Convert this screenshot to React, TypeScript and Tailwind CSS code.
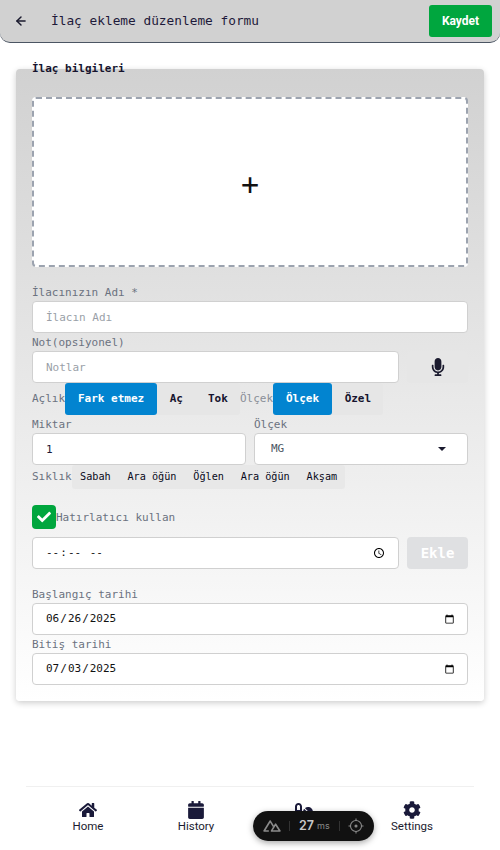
import { ArrowLeft } from 'lucide-react';
import { FaCalendar, FaCheck, FaCog, FaHome, FaMicrophone, FaPills } from 'react-icons/fa';

const mono = { fontFamily: '"DejaVu Sans Mono", monospace' };

const inputClass =
  'w-full h-8 bg-white border border-[#d0d0d0] rounded-[4px] px-[13px] text-[11px] text-[#1e1a3a] placeholder:text-[#9a9fa8] outline-none';

const pickerClass =
  'w-full h-8 bg-white border border-[#d0d0d0] rounded-[4px] pl-[12px] pr-[10px] text-[11px] text-[#111] outline-none';

function Label({ children }: { children: React.ReactNode }) {
  return <label className="block h-[18px] leading-[20px] text-[11px] text-[#6b7280]">{children}</label>;
}

function Segment({ label, active }: { label: string; active?: boolean }) {
  return (
    <button
      className={
        active
          ? 'h-8 px-[13px] rounded-[3px] bg-[#0284d0] text-white text-[11px] font-bold whitespace-nowrap'
          : 'h-8 px-[12.5px] text-[#16142e] text-[11px] font-bold whitespace-nowrap'
      }
    >
      {label}
    </button>
  );
}

function NavItem({ icon, label }: { icon: React.ReactNode; label?: string }) {
  return (
    <div className="w-[108px] flex flex-col items-center text-[#1a1a3a]">
      <div className="h-[18px] flex items-center text-[18px]">{icon}</div>
      {label && <span className="text-[11.5px] leading-[14px] text-[#1a1a2e]">{label}</span>}
    </div>
  );
}

export default function App() {
  return (
    <div className="relative h-[850px] bg-white overflow-hidden" style={mono}>
      <header className="h-[43px] bg-[#d1d1d1] border-b border-[#4b5563] rounded-b-[10px] flex items-center pl-[14px] pr-2">
        <ArrowLeft className="w-[14px] h-[14px] text-[#1a1a2e]" strokeWidth={2.5} />
        <h1 className="ml-[23px] flex-1 text-[12.8px] text-[#1e1a3a]">İlaç ekleme düzenleme formu</h1>
        <button
          className="w-[63px] h-8 rounded-[3px] bg-[#00a63e] text-white text-[12px] font-bold"
          style={{ fontFamily: 'Roboto, sans-serif' }}
        >
          Kaydet
        </button>
      </header>

      <fieldset className="mx-4 mt-[19px] h-[639px] px-4 pb-4 rounded-[4px] bg-gradient-to-b from-[#d1d1d1] to-white shadow-[0_2px_6px_rgba(0,0,0,0.2)]">
        <legend className="text-[11px] leading-[13px] font-bold text-[#16142e]">İlaç bilgileri</legend>

        <div className="mt-[22px] h-[170px] bg-white border-2 border-dashed border-[#9ca3af] rounded-[4px] flex items-center justify-center">
          <span className="pt-[5px] text-[30px] leading-none text-[#111]">+</span>
        </div>

        <div className="mt-4">
          <Label>İlacınızın Adı *</Label>
          <input className={inputClass} placeholder="İlacın Adı" />
        </div>

        <div>
          <Label>Not(opsiyonel)</Label>
          <div className="flex gap-2">
            <input className={`${inputClass} flex-1`} placeholder="Notlar" />
            <button className="w-[61px] h-8 rounded-[4px] bg-[#e6e6e6] flex items-center justify-center text-[#1a1a2e] text-[18px]">
              <FaMicrophone />
            </button>
          </div>
        </div>

        <div className="flex items-center h-8">
          <span className="w-[33px] text-[11px] text-[#6b7280]">Açlık</span>
          <div className="flex w-[175px] bg-[#e6e6e6] rounded-[3px]">
            <Segment label="Fark etmez" active />
            <Segment label="Aç" />
            <Segment label="Tok" />
          </div>
          <span className="w-[33px] text-[11px] text-[#8a8f98]">Ölçek</span>
          <div className="flex w-[110px] bg-[#e6e6e6] rounded-[3px]">
            <Segment label="Ölçek" active />
            <Segment label="Özel" />
          </div>
        </div>

        <div className="flex gap-2">
          <div className="flex-1">
            <Label>Miktar</Label>
            <input className={inputClass} defaultValue="1" />
          </div>
          <div className="flex-1">
            <Label>Ölçek</Label>
            <div className={`${inputClass} flex items-center justify-between pl-4 pr-[21px]`}>
              <span className="text-[#4b5563]">MG</span>
              <span className="w-0 h-0 border-x-[4px] border-x-transparent border-t-[4px] border-t-[#1a1a2e]" />
            </div>
          </div>
        </div>

        <div className="flex items-center h-6">
          <span className="w-10 text-[11px] text-[#6b7280]">Sıklık</span>
          <div className="flex w-[273px] h-6 items-center gap-[16.75px] px-2 bg-[#e8e8e8] rounded-[3px] text-[10.2px] text-[#0a0a20] whitespace-nowrap">
            <span>Sabah</span>
            <span>Ara öğün</span>
            <span>Öğlen</span>
            <span>Ara öğün</span>
            <span>Akşam</span>
          </div>
        </div>

        <div className="flex items-center mt-4">
          <span className="w-6 h-6 rounded-[4px] bg-[#00a63e] flex items-center justify-center text-white text-[14px]">
            <FaCheck />
          </span>
          <span className="pt-[2px] text-[11px] text-[#6b7280]">Hatırlatıcı kullan</span>
        </div>

        <div className="flex gap-2 mt-2">
          <input type="time" className={`${pickerClass} flex-1`} />
          <button className="w-[61px] h-8 rounded-[4px] bg-[#dfe0e2] text-white text-[14px] font-bold">Ekle</button>
        </div>

        <div className="mt-4">
          <Label>Başlangıç tarihi</Label>
          <input type="date" className={pickerClass} defaultValue="2025-06-26" />
        </div>
        <div>
          <Label>Bitiş tarihi</Label>
          <input type="date" className={pickerClass} defaultValue="2025-07-03" />
        </div>
      </fieldset>

      <nav
        className="absolute bottom-0 left-[26px] right-[26px] h-[64px] border-t border-[#f0f0f0] flex justify-center pt-[14px]"
        style={{ fontFamily: 'Roboto, sans-serif' }}
      >
        <NavItem icon={<FaHome />} label="Home" />
        <NavItem icon={<FaCalendar />} label="History" />
        <NavItem icon={<FaPills />} />
        <NavItem icon={<FaCog />} label="Settings" />
      </nav>

      {/* nuxt devtools pill sits over the nav */}
      <div
        className="absolute left-[253px] top-[811px] w-[121px] h-[30px] rounded-full bg-[#111] shadow-[0_2px_6px_rgba(0,0,0,0.35)] flex items-center text-[#8a8a8a]"
        style={{ fontFamily: 'Inter, sans-serif' }}
      >
        <svg viewBox="0 0 20 13" className="ml-[10px] w-[18px] h-[12px]" fill="none" stroke="currentColor" strokeWidth="1.8" strokeLinejoin="round">
          <path d="M6.5 12H1.2L8 1l3.8 6.2" />
          <path d="M9.5 12h9.3L14 4.5z" />
        </svg>
        <span className="ml-2 w-px h-[10px] bg-[#333]" />
        <span className="ml-[9px] text-[12.5px] font-semibold text-[#c8c8c8]">27</span>
        <span className="ml-[3px] text-[9px]">ms</span>
        <span className="ml-[9px] w-px h-[10px] bg-[#333]" />
        <svg viewBox="0 0 16 16" className="ml-[8px] w-[16px] h-[16px]" fill="none" stroke="currentColor" strokeWidth="1.1">
          <circle cx="8" cy="8" r="5.5" />
          <circle cx="8" cy="8" r="1" fill="currentColor" />
          <path d="M8 0.5v2.5M8 13v2.5M0.5 8H3M13 8h2.5" />
        </svg>
      </div>
    </div>
  );
}
